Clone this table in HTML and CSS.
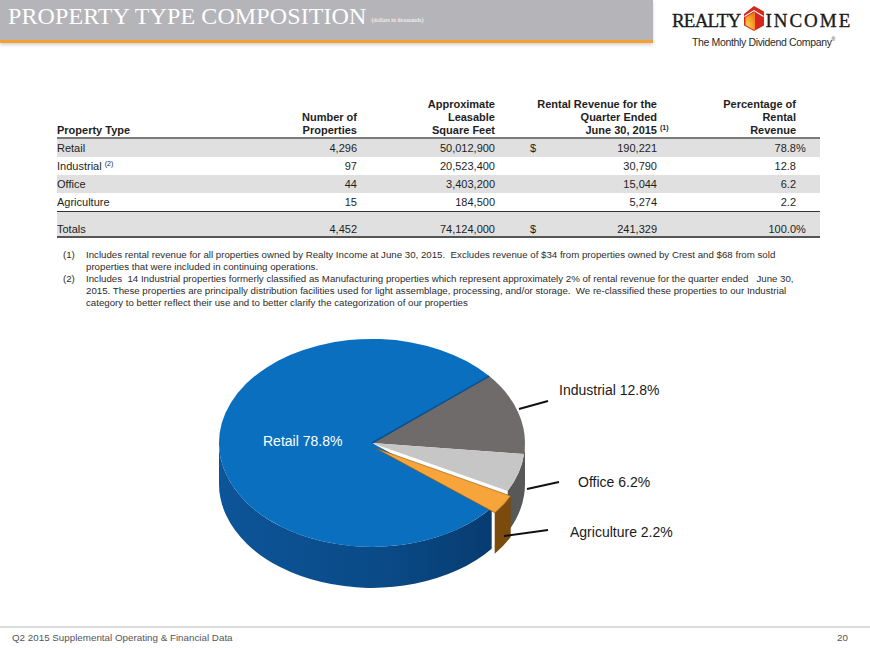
FILE: index.html
```html
<!DOCTYPE html>
<html>
<head>
<meta charset="utf-8">
<title>Property Type Composition</title>
<link rel="stylesheet" href="styles.css">
</head>
<body>
<div class="page">
  <header class="header">
    <div class="titlebar">
      <h1 class="title">PROPERTY TYPE COMPOSITION<span class="title-note">(dollars in thousands)</span></h1>
    </div>
    <div class="logo">
      <div class="logo-mark">
        <span class="logo-word realty">REALTY</span>
        <svg class="logo-icon" viewBox="0 0 20 25" width="20" height="25">
          <defs>
            <radialGradient id="sun" cx="0.1" cy="1" r="1.1">
              <stop offset="0" stop-color="#ffe27a"/>
              <stop offset="0.5" stop-color="#f9b233"/>
              <stop offset="1" stop-color="#ee7d1a"/>
            </radialGradient>
          </defs>
          <polygon points="10,0 20,5.5 20,19.5 10,25 0,19.5 0,8" fill="#d8261d"/>
          <polygon points="1.5,11.5 10,6.2 11,6.8 11,23.4 10,24 1.5,19" fill="url(#sun)"/>
          <polyline points="0.5,10.5 10,4.6 19.5,10.5" fill="none" stroke="#fff" stroke-width="1.1"/>
        </svg>
        <span class="logo-word income">INCOME</span>
      </div>
      <div class="tagline">The Monthly Dividend Company<sup>®</sup></div>
    </div>
  </header>

  <table class="ptable">
    <colgroup>
      <col class="c-type"><col class="c-num"><col class="c-sqft"><col class="c-rev"><col class="c-pct">
    </colgroup>
    <thead>
      <tr>
        <th class="left">Property Type</th>
        <th>Number of<br>Properties</th>
        <th>Approximate<br>Leasable<br>Square Feet</th>
        <th class="rev">Rental Revenue for the<br>Quarter Ended<br>June 30, 2015<span class="hang"><sup>(1)</sup></span></th>
        <th class="pct">Percentage of<br>Rental<br>Revenue</th>
      </tr>
    </thead>
    <tbody>
      <tr class="shade">
        <td class="left">Retail</td><td>4,296</td><td>50,012,900</td>
        <td class="rev"><div class="money"><span>$</span><span>190,221</span></div></td>
        <td class="pct">78.8<span class="pc">%</span></td>
      </tr>
      <tr>
        <td class="left">Industrial <sup>(2)</sup></td><td>97</td><td>20,523,400</td>
        <td class="rev"><div class="money"><span></span><span>30,790</span></div></td>
        <td class="pct">12.8</td>
      </tr>
      <tr class="shade">
        <td class="left">Office</td><td>44</td><td>3,403,200</td>
        <td class="rev"><div class="money"><span></span><span>15,044</span></div></td>
        <td class="pct">6.2</td>
      </tr>
      <tr class="last">
        <td class="left">Agriculture</td><td>15</td><td>184,500</td>
        <td class="rev"><div class="money"><span></span><span>5,274</span></div></td>
        <td class="pct">2.2</td>
      </tr>
      <tr class="shade total">
        <td class="left">Totals</td><td>4,452</td><td>74,124,000</td>
        <td class="rev"><div class="money"><span>$</span><span>241,329</span></div></td>
        <td class="pct">100.0<span class="pc">%</span></td>
      </tr>
    </tbody>
  </table>

  <div class="notes">
    <div class="note"><span class="num">(1)</span><span class="txt">Includes rental revenue for all properties owned by Realty Income at June 30, 2015.&nbsp; Excludes revenue of $34 from properties owned by Crest and $68 from sold<br>properties that were included in continuing operations.</span></div>
    <div class="note"><span class="num">(2)</span><span class="txt">Includes&nbsp; 14 Industrial properties formerly classified as Manufacturing properties which represent approximately 2% of rental revenue for the quarter ended &nbsp; June 30,<br>2015. These properties are principally distribution facilities used for light assemblage, processing, and/or storage.&nbsp; We re-classified these properties to our Industrial<br>category to better reflect their use and to better clarify the categorization of our properties</span></div>
  </div>

  <svg class="chart" viewBox="0 310 870 317" width="870" height="317">
    <defs>
      <linearGradient id="rimBlue" x1="0" y1="0" x2="1" y2="0">
        <stop offset="0" stop-color="#0c5598"/>
        <stop offset="0.6" stop-color="#0a4a87"/>
        <stop offset="1" stop-color="#073c70"/>
      </linearGradient>
    </defs>
    <!-- side faces -->
    <path d="M491.7 508.7 A153 104 0 0 1 219 444 L219 485 A153 104 0 0 0 491.7 549.7 Z" fill="url(#rimBlue)"/>
    <path d="M525 444 A153 104 0 0 1 524.1 455.05 L524.1 496.05 A153 104 0 0 0 525 485 Z" fill="#4a4747"/>
    <path d="M524.1 455.05 A153 104 0 0 1 507.7 492 L507.7 533 A153 104 0 0 0 524.1 496.05 Z" fill="#585858"/>
    <!-- tops -->
    <path d="M372 444 L489.2 377.1 A153 104 0 0 1 524.1 455.05 Z" fill="#6f6b6b"/>
    <path d="M372 444 L524.1 455.05 A153 104 0 0 1 507.7 492 Z" fill="#c6c6c6"/>
    <path d="M372 444 L491.7 508.7 A153 104 0 1 1 489.2 377.1 Z" fill="#0b6fbf"/>
    <line x1="372" y1="444" x2="489.2" y2="377.1" stroke="#0a5090" stroke-width="1.5"/>
    <g transform="translate(3 5)">
      <path d="M507.7 492 A153 104 0 0 1 491.7 508.7 L491.7 549.7 A153 104 0 0 0 507.7 533 Z" fill="#7b4a0d"/>
      <path d="M372 444 L507.7 492 A153 104 0 0 1 491.7 508.7 Z" fill="#f7a43b" stroke="#8a560f" stroke-width="0.6"/>
    </g>
    <!-- leaders -->
    <line x1="519" y1="410" x2="548" y2="402" stroke="#111" stroke-width="2"/>
    <line x1="527" y1="490" x2="559" y2="483" stroke="#111" stroke-width="2"/>
    <line x1="504" y1="537" x2="548" y2="531" stroke="#111" stroke-width="2"/>
    <!-- labels -->
    <text class="lbl lbl-in" x="263" y="447">Retail 78.8%</text>
    <text class="lbl" x="559" y="396">Industrial 12.8%</text>
    <text class="lbl" x="578" y="488">Office 6.2%</text>
    <text class="lbl" x="570" y="538">Agriculture 2.2%</text>
  </svg>

  <footer class="footer">
    <span>Q2 2015 Supplemental Operating &amp; Financial Data</span>
    <span class="pageno">20</span>
  </footer>
</div>
</body>
</html>
```

FILE: styles.css
```css
html, body {
  margin: 0;
  padding: 0;
}
body {
  width: 870px;
  height: 648px;
  overflow: hidden;
  background: #ffffff;
  font-family: "Liberation Sans", Arial, sans-serif;
  color: #1e1e1e;
}
.page {
  display: flex;
  flex-direction: column;
  height: 648px;
}

/* ---------- header ---------- */
.header {
  display: flex;
  height: 50px;
  flex: none;
}
.titlebar {
  width: 653px;
  height: 40px;
  background: #b4b4b9;
  border-bottom: 3px solid #f6a030;
  box-shadow: 0 2px 3px rgba(0, 0, 0, 0.18);
}
.title {
  margin: 0;
  padding: 4px 0 0 8px;
  font-family: "Liberation Serif", "Times New Roman", serif;
  font-weight: normal;
  font-size: 24px;
  line-height: 24px;
  color: #ffffff;
  white-space: nowrap;
  letter-spacing: 0.1px;
}
.title-note {
  font-size: 6px;
  margin-left: 5px;
  vertical-align: 2px;
  letter-spacing: 0;
}
.logo {
  margin-left: 19px;
  padding-top: 6px;
}
.logo-mark {
  display: flex;
  align-items: flex-start;
  height: 25px;
}
.logo-word {
  font-family: "Liberation Serif", "Times New Roman", serif;
  font-size: 19px;
  line-height: 19px;
  margin-top: 5px;
  color: #1b1b1b;
  -webkit-text-stroke: 0.35px #1b1b1b;
}
.realty {
  letter-spacing: -0.8px;
}
.income {
  letter-spacing: 2px;
  margin-left: 1px;
}
.logo-icon {
  display: block;
  margin-left: 4px;
}
.tagline {
  margin: 5px 0 0 20px;
  font-size: 10.5px;
  line-height: 12px;
  letter-spacing: -0.35px;
  color: #2a2a2a;
  white-space: nowrap;
}
.tagline sup {
  font-size: 5px;
  vertical-align: 5px;
  line-height: 0;
}

/* ---------- table ---------- */
.ptable {
  margin: 48px 0 0 57px;
  width: 763px;
  border-collapse: collapse;
  table-layout: fixed;
  font-size: 11px;
  color: #1e1e1e;
  flex: none;
}
.c-type { width: 183px; }
.c-num { width: 117px; }
.c-sqft { width: 138px; }
.c-rev { width: 170px; }
.c-pct { width: 155px; }

.ptable th {
  font-weight: bold;
  line-height: 13px;
  vertical-align: bottom;
  text-align: right;
  padding: 0;
  border-bottom: 2px solid #7b7b7b;
  white-space: nowrap;
}
.ptable td {
  height: 18px;
  line-height: 18px;
  padding: 0;
  text-align: right;
  white-space: nowrap;
}
.ptable .left { text-align: left; }
.ptable th.rev { padding-right: 8px; }
.ptable td.rev { padding: 0 8px 0 35px; }
.ptable .pct { padding-right: 24px; }
.money {
  display: flex;
  justify-content: space-between;
}
.hang {
  display: inline-block;
  width: 0;
  overflow: visible;
}
.hang sup {
  margin-left: 3px;
}
.ptable sup {
  font-size: 7px;
  line-height: 0;
  vertical-align: 4px;
}
.pc {
  display: inline-block;
  width: 0;
  overflow: visible;
}
.shade td {
  background: #e0e0e0;
}
.last td {
  border-bottom: 1px solid #333333;
}
.total td {
  height: 24px;
  line-height: 13px;
  vertical-align: bottom;
  border-bottom: 2px solid #555555;
}

/* ---------- notes ---------- */
.notes {
  margin: 11px 0 0 63px;
  font-size: 9.7px;
  line-height: 12px;
  color: #2b2b2b;
  flex: none;
}
.note {
  display: flex;
}
.note .num {
  width: 23px;
  flex: none;
}
.note .txt {
  white-space: nowrap;
}

/* ---------- chart ---------- */
.chart {
  display: block;
  flex: none;
}
.lbl {
  font-family: "Liberation Sans", Arial, sans-serif;
  font-size: 14px;
  fill: #1a1a1a;
}
.lbl-in {
  fill: #ffffff;
}

/* ---------- footer ---------- */
.footer {
  margin-top: auto;
  flex: none;
  height: 19px;
  border-top: 2px solid #dadada;
  padding: 2px 22px 0 12px;
  display: flex;
  justify-content: space-between;
  font-size: 9.8px;
  line-height: 16px;
  color: #555555;
}
```
